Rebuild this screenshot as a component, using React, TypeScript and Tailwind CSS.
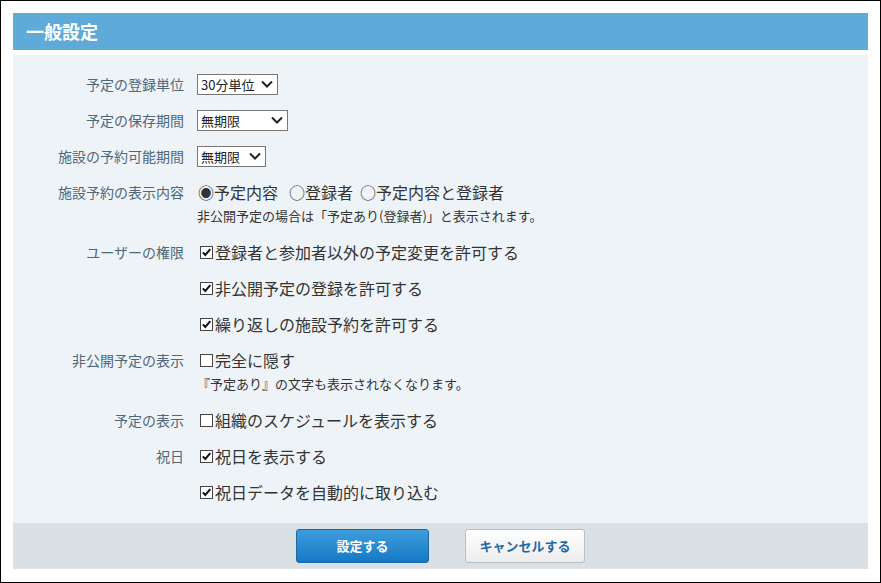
import { FC, ReactNode } from 'react';

const font = { fontFamily: '"Noto Sans CJK JP", "DejaVu Sans", sans-serif' };

const Select: FC<{ value: string; width: string }> = ({ value, width }) => (
  <div
    className={`flex items-center justify-between h-[21px] ${width} border border-[#767676] bg-white pl-[3px] pr-[3px] text-[13px] text-[#222] leading-none`}
  >
    <span>{value}</span>
    <svg width="12" height="8" viewBox="0 0 12 8" className="mr-[1px]">
      <path d="M1 1.5 L6 6.5 L11 1.5" fill="none" stroke="#222" strokeWidth="2" />
    </svg>
  </div>
);

const Line: FC<{ children: ReactNode }> = ({ children }) => (
  <div className="flex items-center h-9 text-[16px] text-[#333]">{children}</div>
);

const Note: FC<{ children: ReactNode }> = ({ children }) => (
  <p className="-mt-[2px] mb-[10px] leading-4 text-[13px] text-[#333]">{children}</p>
);

const Row: FC<{ label: string; children: ReactNode }> = ({ label, children }) => (
  <>
    <div className="flex items-center justify-end h-9 text-[14px] text-[#4f677a]">{label}</div>
    <div className="pl-[13px]">{children}</div>
  </>
);

const Box: FC<{ on?: boolean }> = ({ on }) => (
  <svg width="13" height="13" viewBox="0 0 13 13" className="ml-[3px] mr-[2px] shrink-0">
    <rect x="0.5" y="0.5" width="12" height="12" fill="white" stroke="#444" />
    {on && (
      <path d="M2.8 6.4 L5.3 9 L10.3 3.2" fill="none" stroke="#111" strokeWidth="2" />
    )}
  </svg>
);

const Check: FC<{ on?: boolean; children: ReactNode }> = ({ on, children }) => (
  <Line>
    <Box on={on} />
    <span>{children}</span>
  </Line>
);

export default function App() {
  return (
    <div
      className="w-[881px] h-[583px] border border-black bg-white p-3 flex flex-col"
      style={font}
    >
      <header className="h-[37px] bg-[#5eaad9] flex items-center px-[13px]">
        <h1 className="text-white font-bold text-[18px]">一般設定</h1>
      </header>

      <section className="mt-[5px] bg-[#eef3f7] pt-[11px] pb-[13px]">
        <div className="grid grid-cols-[171px_1fr]">
          <Row label="予定の登録単位">
            <div className="flex items-center h-9">
              <Select value="30分単位" width="w-[81px]" />
            </div>
          </Row>
          <Row label="予定の保存期間">
            <div className="flex items-center h-9">
              <Select value="無期限" width="w-[91px]" />
            </div>
          </Row>
          <Row label="施設の予約可能期間">
            <div className="flex items-center h-9">
              <Select value="無期限" width="w-[69px]" />
            </div>
          </Row>
          <Row label="施設予約の表示内容">
            <Line>
              <span className="ml-[1px]">◉予定内容</span>
              <span className="ml-[11px]">○登録者</span>
              <span className="ml-[7px]">○予定内容と登録者</span>
            </Line>
            <Note>非公開予定の場合は「予定あり(登録者)」と表示されます。</Note>
          </Row>
          <Row label="ユーザーの権限">
            <Check on>登録者と参加者以外の予定変更を許可する</Check>
            <Check on>非公開予定の登録を許可する</Check>
            <Check on>繰り返しの施設予約を許可する</Check>
          </Row>
          <Row label="非公開予定の表示">
            <Check>完全に隠す</Check>
            <Note>『予定あり』の文字も表示されなくなります。</Note>
          </Row>
          <Row label="予定の表示">
            <Check>組織のスケジュールを表示する</Check>
          </Row>
          <Row label="祝日">
            <Check on>祝日を表示する</Check>
            <Check on>祝日データを自動的に取り込む</Check>
          </Row>
        </div>
      </section>

      <footer className="h-[46px] bg-[#dbe0e4] flex items-center justify-center gap-9">
        <button className="w-[133px] h-[34px] rounded-[3px] border border-[#1b6aa5] bg-gradient-to-b from-[#3d9ddb] to-[#1479c6] text-white font-bold text-[13px]">
          設定する
        </button>
        <button className="w-[120px] h-[34px] rounded-[3px] border border-[#b8c0c6] bg-gradient-to-b from-white to-[#ececec] text-[#1d6ba6] font-bold text-[13px]">
          キャンセルする
        </button>
      </footer>
    </div>
  );
}
